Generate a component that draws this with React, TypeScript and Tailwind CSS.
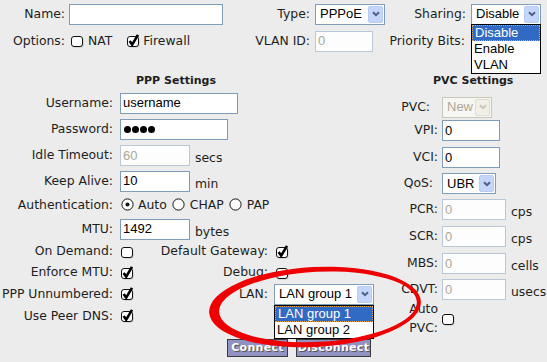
import type { ReactNode } from 'react';

const labelFont = "font-['DejaVu_Sans',Verdana,sans-serif] text-[12.4px] text-[#1e1e1e]";
const ctrlFont = "font-['Liberation_Sans',Arial,sans-serif] text-[13px]";

function Check({ on }: { on?: boolean }) {
  return (
    <svg width="14" height="14" viewBox="0 0 14 14" className="shrink-0">
      <rect x="1.5" y="3.5" width="11" height="10" rx="2.5" fill="#9a9a9a" opacity="0.5" />
      <rect x="0.5" y="2.5" width="11" height="10" rx="2.5" fill="#fff" stroke="#111" />
      {on ? <path d="M2.6 7 L5.2 10.6 L11 0.8" fill="none" stroke="#000" strokeWidth="2.6" /> : null}
    </svg>
  );
}

function Radio({ on }: { on?: boolean }) {
  return (
    <svg width="13" height="13" viewBox="0 0 13 13" className="shrink-0">
      <circle cx="6.5" cy="6.5" r="5.6" fill="#fff" stroke="#111" />
      {on ? <circle cx="6.5" cy="6.5" r="2" fill="#111" /> : null}
    </svg>
  );
}

function TextBox({ w, value, disabled }: { w: string; value?: string; disabled?: boolean }) {
  return (
    <div
      className={`${w} flex h-[21px] shrink-0 items-center border px-[2px] ${ctrlFont} ${
        disabled ? 'border-[#b9c7d6] bg-[#fdfdfd] text-[#aca899]' : 'border-[#7f9db9] bg-white text-black'
      }`}
    >
      {value}
    </div>
  );
}

function Select({ w, value, disabled }: { w: string; value: string; disabled?: boolean }) {
  return (
    <div
      className={`${w} flex h-[21px] shrink-0 items-center justify-between border pl-[4px] pr-[1px] ${ctrlFont} ${
        disabled ? 'border-[#c9c7ba] bg-[#f6f6f2] text-[#aca899]' : 'border-[#7f9db9] bg-white text-black'
      }`}
    >
      <span>{value}</span>
      <span
        className={`flex h-[17px] w-[15px] items-center justify-center rounded-[2px] border ${
          disabled ? 'border-[#e0ded4] bg-[#f1efe6]' : 'border-[#b8cbf6] bg-[#c5d6fc]'
        }`}
      >
        <svg width="8" height="6" viewBox="0 0 8 6">
          <path d="M1 1.2 L4 4.2 L7 1.2" fill="none" stroke={disabled ? '#c9c7ba' : '#4d6185'} strokeWidth="2" />
        </svg>
      </span>
    </div>
  );
}

function ListBox({ items, w }: { items: string[]; w: string }) {
  return (
    <div className={`${w} border border-black bg-white ${ctrlFont}`}>
      {items.map((it, i) => (
        <div
          key={it}
          className={`flex h-[16px] items-center px-[2px] leading-none ${
            i === 0 ? 'border border-dotted border-[#e8a33d] bg-[#316ac5] text-white' : 'text-black'
          }`}
        >
          {it}
        </div>
      ))}
    </div>
  );
}

function Row({ h, label, children }: { h: string; label: ReactNode; children?: ReactNode }) {
  return (
    <div className={`flex ${h} items-center`}>
      <div className="w-[113px] shrink-0 text-right">{label}</div>
      <div className="ml-[7px] flex items-center">{children}</div>
    </div>
  );
}

function PvcRow({ h, label, pr, children }: { h: string; label: ReactNode; pr?: string; children?: ReactNode }) {
  return (
    <div className={`flex ${h} items-center`}>
      <div className={`w-[48px] shrink-0 text-right ${pr ?? ''}`}>{label}</div>
      <div className="ml-[4px] flex items-center gap-[5px]">{children}</div>
    </div>
  );
}

const btn =
  "h-[18px] border border-[#3c3c3c] bg-[#9191c2] font-['DejaVu_Sans',sans-serif] text-[11px] font-bold tracking-[0.3px] text-white [text-shadow:1px_1px_0_#555]";

export default function App() {
  return (
    <div className={`relative h-[362px] w-[547px] overflow-hidden bg-[#ececec] ${labelFont}`}>
      {/* top rows */}
      <div className="flex h-[28px] items-center">
        <div className="w-[65px] text-right">Name:</div>
        <div className="ml-[4px]">
          <TextBox w="w-[154px]" />
        </div>
        <div className="w-[87px] text-right">Type:</div>
        <div className="ml-[5px]">
          <Select w="w-[70px]" value="PPPoE" />
        </div>
        <div className="w-[81px] text-right">Sharing:</div>
        <div className="relative ml-[5px]">
          <Select w="w-[70px]" value="Disable" />
          <div className="absolute left-0 top-[20px] z-10">
            <ListBox w="w-[70px]" items={['Disable', 'Enable', 'VLAN']} />
          </div>
        </div>
      </div>

      <div className="flex h-[26px] items-center">
        <div className="flex w-[223px] items-center">
          <div className="w-[65px] text-right">Options:</div>
          <div className="ml-[6px] flex items-center gap-[3px]">
            <Check />
            <span>NAT</span>
          </div>
          <div className="ml-[15px] flex items-center gap-[2px]">
            <Check on />
            <span>Firewall</span>
          </div>
        </div>
        <div className="w-[87px] text-right">VLAN ID:</div>
        <div className="ml-[5px]">
          <TextBox w="w-[58px]" value="0" disabled />
        </div>
        <div className="w-[92px] text-right">Priority Bits:</div>
      </div>

      <div className="mt-[18px] flex">
        {/* PPP settings */}
        <div className="w-[390px] shrink-0">
          <div className="flex h-[18px] items-center pl-[136px] text-[11px] font-bold">PPP Settings</div>
          <Row h="h-[26px]" label="Username:">
            <TextBox w="w-[118px]" value="username" />
          </Row>
          <Row h="h-[26px]" label="Password:">
            <div className="flex h-[21px] w-[108px] items-center gap-[1px] border border-[#7f9db9] bg-white px-[3px]">
              {[0, 1, 2, 3].map((i) => (
                <span key={i} className="h-[7px] w-[7px] rounded-full bg-black" />
              ))}
            </div>
          </Row>
          <Row h="h-[27px]" label="Idle Timeout:">
            <TextBox w="w-[70px]" value="60" disabled />
            <span className="ml-[5px] mt-[6px]">secs</span>
          </Row>
          <Row h="h-[24px]" label="Keep Alive:">
            <TextBox w="w-[70px]" value="10" />
            <span className="ml-[5px] mt-[6px]">min</span>
          </Row>
          <Row h="h-[24px]" label="Authentication:">
            <div className="ml-[1px] flex items-center gap-[4px]">
              <Radio on />
              <span>Auto</span>
            </div>
            <div className="ml-[5px] flex items-center gap-[5px]">
              <Radio />
              <span>CHAP</span>
            </div>
            <div className="ml-[5px] flex items-center gap-[5px]">
              <Radio />
              <span>PAP</span>
            </div>
          </Row>
          <Row h="h-[24px]" label="MTU:">
            <TextBox w="w-[70px]" value="1492" />
            <span className="ml-[5px] mt-[6px]">bytes</span>
          </Row>

          <div className="grid grid-cols-[113px_12px_127px_auto] items-center gap-x-[8px]">
            <div className="flex h-[21px] items-center justify-end">On Demand:</div>
            <Check />
            <div className="text-right whitespace-nowrap">Default Gateway:</div>
            <Check on />
            <div className="flex h-[21px] items-center justify-end">Enforce MTU:</div>
            <Check on />
            <div className="text-right">Debug:</div>
            <Check />
            <div className="flex h-[22px] items-center justify-end whitespace-nowrap">PPP Unnumbered:</div>
            <Check on />
            <div className="text-right">LAN:</div>
            <div className="relative -ml-[2px]">
              <Select w="w-[100px]" value="LAN group 1" />
              <div className="absolute left-0 top-[21px] z-10">
                <ListBox w="w-[100px]" items={['LAN group 1', 'LAN group 2']} />
              </div>
            </div>
            <div className="flex h-[22px] items-center justify-end">Use Peer DNS:</div>
            <Check on />
            <div />
            <div />
          </div>

          <div className="mt-[12px] flex gap-[8px] pl-[227px]">
            <button type="button" className={`${btn} w-[61px]`}>
              Connect
            </button>
            <button type="button" className={`${btn} w-[75px]`}>
              Disconnect
            </button>
          </div>
        </div>

        {/* PVC settings */}
        <div className="flex-1">
          <div className="flex h-[18px] items-center pl-[43px] text-[11px] font-bold">PVC Settings</div>
          <div className="mt-[7px]" />
          <PvcRow h="h-[20px]" label="PVC:" pr="pr-[8px]">
            <Select w="w-[50px]" value="New" disabled />
          </PvcRow>
          <div className="mt-[3px]" />
          <PvcRow h="h-[21px]" label="VPI:">
            <TextBox w="w-[58px]" value="0" />
          </PvcRow>
          <div className="mt-[6px]" />
          <PvcRow h="h-[21px]" label="VCI:">
            <TextBox w="w-[58px]" value="0" />
          </PvcRow>
          <div className="mt-[5px]" />
          <PvcRow h="h-[21px]" label="QoS:" pr="pr-[5px]">
            <Select w="w-[54px]" value="UBR" />
          </PvcRow>
          <div className="mt-[5px]" />
          <PvcRow h="h-[21px]" label="PCR:">
            <TextBox w="w-[64px]" value="0" disabled />
            <span className="mt-[5px]">cps</span>
          </PvcRow>
          <div className="mt-[6px]" />
          <PvcRow h="h-[21px]" label="SCR:">
            <TextBox w="w-[64px]" value="0" disabled />
            <span className="mt-[5px]">cps</span>
          </PvcRow>
          <div className="mt-[6px]" />
          <PvcRow h="h-[21px]" label="MBS:">
            <TextBox w="w-[64px]" value="0" disabled />
            <span className="mt-[5px]">cells</span>
          </PvcRow>
          <div className="mt-[5px]" />
          <PvcRow h="h-[21px]" label="CDVT:">
            <TextBox w="w-[64px]" value="0" disabled />
            <span className="mt-[5px]">usecs</span>
          </PvcRow>
          <div className="mt-[4px]" />
          <PvcRow h="h-[30px]" label={<span className="leading-[15px]">Auto<br />PVC:</span>}>
            <Check />
          </PvcRow>
        </div>
      </div>

      {/* red highlight ring */}
      <svg className="pointer-events-none absolute left-0 top-0 z-20" width="547" height="362" viewBox="0 0 547 362">
        <path
          fillRule="evenodd"
          fill="#ee0000"
          transform="rotate(-3 315 307)"
          d="M209 307 a106 40 0 1 0 212 0 a106 40 0 1 0 -212 0 Z M219 307 a99 35 0 1 0 198 0 a99 35 0 1 0 -198 0 Z"
        />
      </svg>
    </div>
  );
}
